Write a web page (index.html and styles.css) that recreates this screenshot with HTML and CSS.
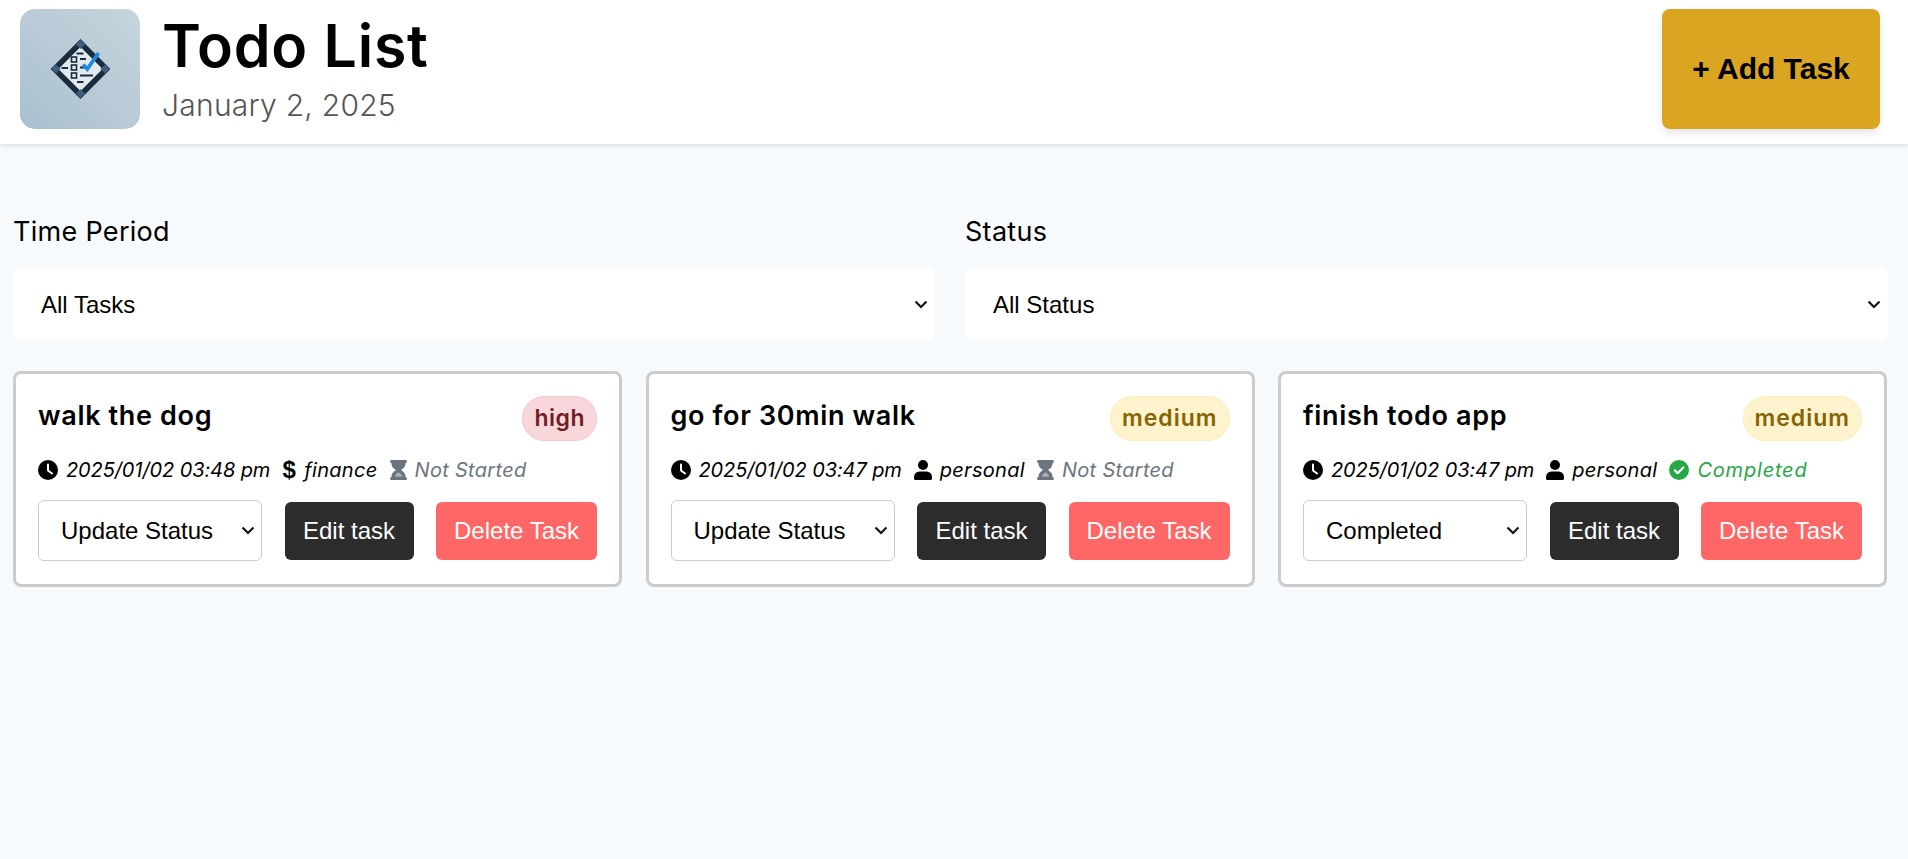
FILE: index.html
```html
<!DOCTYPE html>
<html lang="en">
<head>
    <meta charset="UTF-8">
    <meta name="viewport" content="width=device-width, initial-scale=1.0">
    <title>Todo List</title>
    <link rel="stylesheet" href="styles.css">
</head>
<body>
    <svg class="icon-defs" width="0" height="0" aria-hidden="true">
        <defs>
            <linearGradient id="logoBg" x1="1" y1="0" x2="0" y2="1">
                <stop offset="0" stop-color="#c6d5de"/>
                <stop offset="1" stop-color="#aac0ce"/>
            </linearGradient>
            <symbol id="icon-clock" viewBox="0 0 20 20">
                <circle cx="10" cy="10" r="10" fill="#000"/>
                <path d="M10 4.5V10.5L14 13.5" fill="none" stroke="#fff" stroke-width="2" stroke-linecap="round" stroke-linejoin="round"/>
            </symbol>
            <symbol id="icon-user" viewBox="0 0 18 20">
                <circle cx="9" cy="5" r="5" fill="#000"/>
                <path d="M5.5 11.5h7A5.5 5.5 0 0 1 18 17v1.5A1.5 1.5 0 0 1 16.500 20h-15A1.500 1.500 0 0 1 0 18.500V17a5.500 5.500 0 0 1 5.500-5.500z" fill="#000"/>
            </symbol>
            <symbol id="icon-hourglass" viewBox="0 0 16 20">
                <path d="M1 0h14a1 1 0 0 1 0 3v1c0 2.500-2 4.500-4.500 6 2.500 1.500 4.500 3.500 4.500 6v1a1 1 0 0 1 0 3H1a1 1 0 0 1 0-3v-1c0-2.500 2-4.500 4.500-6C3 8.500 1 6.500 1 4V3a1 1 0 0 1 0-3z" fill="#6c757d"/>
                <path d="M4.500 16.800c0-1.800 1.500-3.300 3.500-4.500 2 1.200 3.500 2.700 3.500 4.500z" fill="#aab1b7"/>
            </symbol>
            <symbol id="icon-check" viewBox="0 0 20 20">
                <circle cx="10" cy="10" r="10" fill="#28a745"/>
                <path d="M5.800 10.300l2.900 2.900 5.500-5.700" fill="none" stroke="#fff" stroke-width="2.200" stroke-linecap="round" stroke-linejoin="round"/>
            </symbol>
        </defs>
    </svg>

    <header class="app-header">
        <div class="brand">
            <svg class="logo" viewBox="0 0 120 120" role="img" aria-label="Todo List logo">
                <rect width="120" height="120" fill="url(#logoBg)"/>
                <path d="M60.500 34 L86.500 60 L60.500 86 L34.500 60Z" fill="#e3eaee" stroke="#1b2c3e" stroke-width="5.500"/>
                <path d="M60.500 31 L65 35.500 L60.500 40 L56 35.500Z M60.500 80 L65 84.500 L60.500 89 L56 84.500Z M31.500 60 L36 55.500 L40.500 60 L36 64.500Z M80.500 60 L85 55.500 L89.500 60 L85 64.500Z" fill="#3f5f80"/>
                <path d="M56.500 44.500h7M41.500 59h6.500M57 73h6.500" stroke="#1b2c3e" stroke-width="1.800"/>
                <rect x="51.500" y="48" width="5" height="5" fill="none" stroke="#1b2c3e" stroke-width="1.600"/>
                <rect x="51.500" y="56" width="5" height="5" fill="none" stroke="#1b2c3e" stroke-width="1.600"/>
                <rect x="51.500" y="64" width="5" height="5" fill="none" stroke="#1b2c3e" stroke-width="1.600"/>
                <path d="M60 50h6M60 58.500h5M60 66.500h13" stroke="#1b2c3e" stroke-width="1.800"/>
                <path d="M63 55.500 L67.300 60 L78.500 44" fill="none" stroke="#1e88e5" stroke-width="3.800"/>
            </svg>
            <div class="brand-text">
                <h1>Todo List</h1>
                <p class="today">January 2, 2025</p>
            </div>
        </div>
        <button type="button" class="add-btn">+ Add Task</button>
    </header>

    <main class="content">
        <section class="filters">
            <div class="filter">
                <label for="time-period">Time Period</label>
                <select id="time-period">
                    <option>All Tasks</option>
                </select>
            </div>
            <div class="filter">
                <label for="status-filter">Status</label>
                <select id="status-filter">
                    <option>All Status</option>
                </select>
            </div>
        </section>

        <section class="task-grid">
            <article class="task-card">
                <div class="task-top">
                    <h2>walk the dog</h2>
                    <span class="priority high">high</span>
                </div>
                <div class="task-meta">
                    <span class="meta-item meta-date"><svg class="icon"><use href="#icon-clock"/></svg>2025/01/02 03:48 pm</span>
                    <span class="meta-item"><span class="dollar">$</span>finance</span>
                    <span class="meta-item pending"><svg class="icon icon-narrow"><use href="#icon-hourglass"/></svg>Not Started</span>
                </div>
                <div class="task-actions">
                    <select class="status-select"><option>Update Status</option></select>
                    <button type="button" class="edit-btn">Edit task</button>
                    <button type="button" class="delete-btn">Delete Task</button>
                </div>
            </article>

            <article class="task-card">
                <div class="task-top">
                    <h2>go for 30min walk</h2>
                    <span class="priority medium">medium</span>
                </div>
                <div class="task-meta">
                    <span class="meta-item meta-date"><svg class="icon"><use href="#icon-clock"/></svg>2025/01/02 03:47 pm</span>
                    <span class="meta-item"><svg class="icon icon-user"><use href="#icon-user"/></svg>personal</span>
                    <span class="meta-item pending"><svg class="icon icon-narrow"><use href="#icon-hourglass"/></svg>Not Started</span>
                </div>
                <div class="task-actions">
                    <select class="status-select"><option>Update Status</option></select>
                    <button type="button" class="edit-btn">Edit task</button>
                    <button type="button" class="delete-btn">Delete Task</button>
                </div>
            </article>

            <article class="task-card">
                <div class="task-top">
                    <h2>finish todo app</h2>
                    <span class="priority medium">medium</span>
                </div>
                <div class="task-meta">
                    <span class="meta-item meta-date"><svg class="icon"><use href="#icon-clock"/></svg>2025/01/02 03:47 pm</span>
                    <span class="meta-item"><svg class="icon icon-user"><use href="#icon-user"/></svg>personal</span>
                    <span class="meta-item done"><svg class="icon"><use href="#icon-check"/></svg>Completed</span>
                </div>
                <div class="task-actions">
                    <select class="status-select"><option>Completed</option></select>
                    <button type="button" class="edit-btn">Edit task</button>
                    <button type="button" class="delete-btn">Delete Task</button>
                </div>
            </article>
        </section>
    </main>
</body>
</html>
```

FILE: styles.css
```css
* {
    box-sizing: border-box;
}

body {
    margin: 0;
    height: 859px;
    overflow: hidden;
    font-family: Inter, "Liberation Sans", sans-serif;
    background-color: #f7fafc;
    color: #000;
}

.icon-defs {
    position: absolute;
}

.app-header {
    display: flex;
    justify-content: space-between;
    align-items: flex-start;
    height: 144px;
    padding: 9px 28px 0 20px;
    background-color: #fff;
    box-shadow: 0 2px 4px rgba(0, 0, 0, 0.1);
}

.brand {
    display: flex;
    align-items: flex-start;
    gap: 22px;
}

.logo {
    width: 120px;
    height: 120px;
    border-radius: 15px;
}

h1 {
    margin: 4px 0 0;
    font-size: 59px;
    line-height: 66px;
    font-weight: 600;
    letter-spacing: 0.75px;
}

.today {
    margin: 6px 0 0;
    font-size: 30px;
    line-height: 40px;
    font-weight: 300;
    letter-spacing: 0.25px;
    color: #555;
}

.add-btn {
    width: 218px;
    height: 120px;
    border: none;
    border-radius: 8px;
    background-color: #daa520;
    color: #000;
    font-family: "Liberation Sans", Arial, sans-serif;
    font-size: 30px;
    font-weight: 700;
    box-shadow: 0 4px 8px rgba(0, 0, 0, 0.1);
}

.content {
    padding: 72px 20px 0 13px;
}

.filters {
    display: grid;
    grid-template-columns: 922px 1fr;
    gap: 30px;
}

.filter label {
    display: block;
    margin-bottom: 19px;
    font-size: 27px;
    line-height: 32px;
    letter-spacing: 0.3px;
}

select {
    appearance: none;
    background-color: #fff;
    background-image: url("data:image/svg+xml,%3Csvg xmlns='http://www.w3.org/2000/svg' width='14' height='9' viewBox='0 0 14 9'%3E%3Cpath d='M1.500 1.500L7 7l5.500-5.500' fill='none' stroke='%23111' stroke-width='2.200'/%3E%3C/svg%3E");
    background-repeat: no-repeat;
    color: #000;
    font-family: "Liberation Sans", Arial, sans-serif;
    font-size: 24px;
}

.filter select {
    display: block;
    width: 100%;
    height: 74px;
    padding: 0 28px;
    border: none;
    border-radius: 8px;
    background-position: right 7px center;
}

.task-grid {
    display: grid;
    grid-template-columns: repeat(3, 1fr);
    gap: 23.5px;
    margin-top: 30px;
    padding-right: 1px;
}

.task-card {
    height: 216px;
    padding: 22px;
    border: 3px solid #ccc;
    border-radius: 8px;
    background-color: #fff;
}

.task-top {
    display: flex;
    justify-content: space-between;
    align-items: flex-start;
    height: 45px;
}

h2 {
    margin: 0;
    font-size: 27px;
    line-height: 40px;
    font-weight: 600;
    letter-spacing: 0.65px;
}

.priority {
    padding: 0 11px;
    height: 45px;
    line-height: 43px;
    border: 1px solid transparent;
    border-radius: 22px;
    font-size: 23px;
    font-weight: 600;
    letter-spacing: 0.5px;
}

.priority.high {
    background-color: #f8d7da;
    border-color: #f5c6cb;
    color: #721c24;
}

.priority.medium {
    background-color: #fff3cd;
    border-color: #ffeeba;
    color: #856404;
    letter-spacing: 1px;
}

.task-meta {
    display: flex;
    align-items: center;
    gap: 12px;
    height: 26px;
    margin-top: 16px;
    font-size: 20px;
    font-style: italic;
    letter-spacing: 0.3px;
}

.meta-item {
    display: inline-flex;
    align-items: center;
    gap: 8px;
    white-space: nowrap;
}

.meta-date {
    letter-spacing: -0.1px;
}

.icon {
    width: 20px;
    height: 20px;
    flex-shrink: 0;
}

.icon-user {
    width: 18px;
}

.icon-narrow {
    width: 17px;
}

.dollar {
    width: 14px;
    font-family: "Liberation Sans", Arial, sans-serif;
    font-size: 24px;
    font-style: normal;
    font-weight: 700;
    text-align: center;
}

.pending {
    color: #6c757d;
}

.done {
    color: #28a745;
    letter-spacing: 0.8px;
}

.task-actions {
    display: flex;
    justify-content: space-between;
    align-items: center;
    margin-top: 17px;
}

.status-select {
    width: 224px;
    height: 61px;
    padding: 0 22px;
    border: 1px solid #ccc;
    border-radius: 6px;
    background-position: right 6px center;
}

.edit-btn,
.delete-btn {
    height: 58px;
    border: none;
    border-radius: 6px;
    color: #fff;
    font-family: "Liberation Sans", Arial, sans-serif;
    font-size: 24px;
}

.edit-btn {
    width: 129px;
    background-color: #2c2c2c;
}

.delete-btn {
    width: 161px;
    background-color: #ff6666;
}
```
